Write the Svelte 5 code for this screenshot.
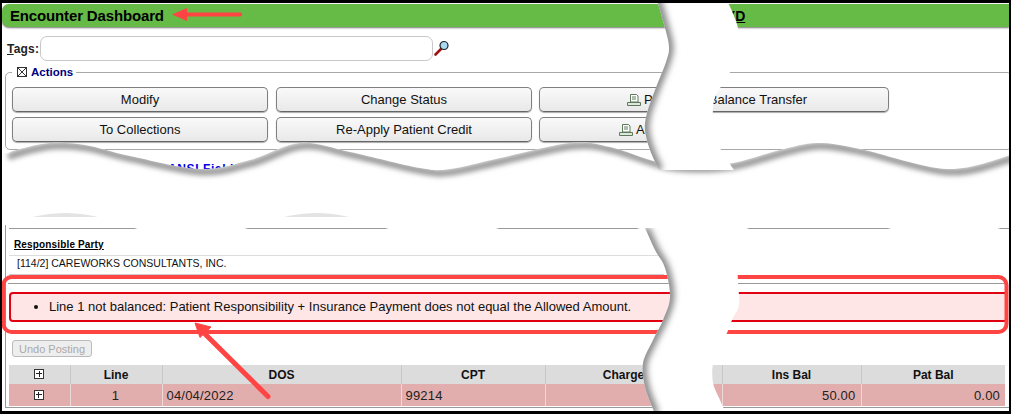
<script>
  function spline(p) {
    let d = `M${p[0][0]} ${p[0][1]}`;
    for (let i = 0; i < p.length - 1; i++) {
      const a = p[Math.max(i - 1, 0)], b = p[i], c = p[i + 1], e = p[Math.min(i + 2, p.length - 1)];
      const c1 = [b[0] + (c[0] - a[0]) / 6, b[1] + (c[1] - a[1]) / 6];
      const c2 = [c[0] - (e[0] - b[0]) / 6, c[1] - (e[1] - b[1]) / 6];
      d += `C${c1[0].toFixed(1)} ${c1[1].toFixed(1)} ${c2[0].toFixed(1)} ${c2[1].toFixed(1)} ${c[0]} ${c[1]}`;
    }
    return d;
  }
  const wave = [[8,153],[20,149],[50,143],[85,145],[130,156],[200,169],[250,160],[300,143],[350,152],[420,168],[450,169],[500,158],[570,143],[610,147],[657,162],[693,166],[733,163],[780,150],[817,143],[860,149],[947,169],[1011,155]];
  const low = [];
  for (let x = 1011; x >= 0; x -= 8) low.push(`L${x} ${(226 + 13 * Math.cos((2 * Math.PI * (x - 191)) / 251)).toFixed(1)}`);
  const waveD = spline(wave);
  const bandD = 'M2 153L' + waveD.slice(1) + low.join('') + 'Z';

  const leftTop = [[657,0],[665,28],[669,47],[666,62],[655,90],[647,113],[645,130],[650,150],[659,170]];
  const rightTop = [[727,0],[738,28],[736,50],[730,72],[716,95],[713,110],[713,130],[716,140],[721,150],[734,170]];
  const leftLow = [[645,228],[655,250],[665,268],[670,297],[663,320],[653,340],[643,363],[645,387],[655,414]];
  const rightLow = [[735,228],[737,260],[738,283],[739,305],[732,320],[727,333],[718,350],[713,363],[713,383],[720,400],[726,414]];
  const shape = (l, r) => spline(l) + 'L' + spline([...r].reverse()).slice(1) + 'Z';
  const topD = shape(leftTop, rightTop);
  const lowD = shape(leftLow, rightLow);
  const leftTopD = spline(leftTop);
  const leftLowD = spline(leftLow);

  const buttonsTop = ['Modify', 'Change Status'];
  const buttonsBottom = ['To Collections', 'Re-Apply Patient Credit'];
</script>

{#snippet printer()}
  <svg class="printer" width="14" height="12" viewBox="0 0 14 12" aria-hidden="true">
    <path d="M3.5 .5h6l1.5 1.5v6H3.5z" fill="#fff" stroke="#5c7a5c"/>
    <path d="M5 3h4M5 5h4" stroke="#5c7a5c"/>
    <path d="M.5 8.5h13v3H.5z" fill="#dfe7dc" stroke="#5c7a5c"/>
  </svg>
{/snippet}

{#snippet plus()}
  <span class="plus"></span>
{/snippet}

<div class="page">
  <header class="title">
    <h1>Encounter Dashboard</h1>
    <span class="user">KAY<u> D</u></span>
  </header>

  <div class="tags">
    <label for="tags"><u>T</u>ags:</label>
    <input id="tags" type="text" />
    <svg width="16" height="16" viewBox="0 0 16 16" aria-hidden="true">
      <path d="M1.5 14.5L7 9" stroke="#a01010" stroke-width="2.6" stroke-linecap="round"/>
      <circle cx="10" cy="5.5" r="4" fill="#a9d8f0" stroke="#222" stroke-width="1.2"/>
    </svg>
  </div>

  <fieldset class="actions">
    <legend><span class="check"></span>Actions</legend>
    <div class="btn-row">
      {#each buttonsTop as b}<button class="btn">{b}</button>{/each}
      <button class="btn wide">{@render printer()}<span><span class="lead">Print Patient </span>Balance Transfer</span></button>
    </div>
    <div class="btn-row">
      {#each buttonsBottom as b}<button class="btn">{b}</button>{/each}
      <button class="btn add">{@render printer()}Add</button>
    </div>
  </fieldset>

  <div class="ansi">ANSI Field</div>

  <section class="panel">
    <div class="rule"></div>
    <div class="rp-label">Responsible Party</div>
    <div class="rp-value">[114/2] CAREWORKS CONSULTANTS, INC.</div>
    <div class="rule2"></div>
    <ul class="alert">
      <li>Line 1 not balanced: Patient Responsibility + Insurance Payment does not equal the Allowed Amount.</li>
    </ul>
    <button class="undo" disabled>Undo Posting</button>
    <table>
      <colgroup>
        <col style="width:61px" /><col style="width:92px" /><col style="width:239px" /><col style="width:144px" />
        <col style="width:177px" /><col style="width:139px" /><col style="width:144px" />
      </colgroup>
      <thead>
        <tr>
          <th>{@render plus()}</th><th>Line</th><th>DOS</th><th>CPT</th><th class="charge">Charge</th><th>Ins Bal</th><th>Pat Bal</th>
        </tr>
      </thead>
      <tbody>
        <tr>
          <td class="c">{@render plus()}</td><td class="c">1</td><td>04/04/2022</td><td>99214</td>
          <td class="r">0.00</td><td class="r">50.00</td><td class="r">0.00</td>
        </tr>
      </tbody>
    </table>
  </section>

  <svg class="overlay" width="1011" height="414" viewBox="0 0 1011 414" aria-hidden="true">
    <defs>
      <filter id="soft" x="-5%" y="-40%" width="110%" height="180%"><feGaussianBlur stdDeviation="2.4"/></filter>
      <filter id="softv" x="-60%" y="-5%" width="220%" height="110%"><feGaussianBlur stdDeviation="3"/></filter>
      <clipPath id="bandClip"><path d={bandD}/></clipPath>
      <clipPath id="topClip"><path d={topD}/></clipPath>
      <clipPath id="lowClip"><path d={lowD}/></clipPath>
    </defs>

    <rect x="3.5" y="277" width="1003" height="55" rx="8" fill="none" stroke="#ff4444" stroke-width="4"/>

    <rect x="30" y="212" width="70" height="5" fill="#e3e3e3"/>
    <rect x="281" y="212" width="70" height="5" fill="#e3e3e3"/>

    <path d={bandD} fill="#fff"/>
    <g clip-path="url(#bandClip)">
      <path d={waveD} transform="translate(3 3)" fill="none" stroke="#999" stroke-width="7" stroke-linecap="round" filter="url(#soft)"/>
    </g>

    <path d={topD} fill="#fff"/>
    <path d={lowD} fill="#fff"/>
    <g clip-path="url(#topClip)"><path d={leftTopD} fill="none" stroke="#888" stroke-width="9" filter="url(#softv)"/></g>
    <g clip-path="url(#lowClip)"><path d={leftLowD} fill="none" stroke="#888" stroke-width="9" filter="url(#softv)"/></g>

    <path d="M183 14.5H240" stroke="#ff4444" stroke-width="4" stroke-linecap="round"/>
    <path d="M172 14.5L187 8V21Z" fill="#ff4444"/>
    <path d="M268 396.5L203 332" stroke="#ff4444" stroke-width="5" stroke-linecap="round"/>
    <path d="M195 323L211 327L200 337.5Z" fill="#ff4444" stroke="#ff4444" stroke-linejoin="round"/>
  </svg>
</div>

<style>
  :global(body) { margin: 0; background: #fff; }
  .page {
    position: relative;
    box-sizing: border-box;
    width: 1011px;
    height: 414px;
    overflow: hidden;
    border: solid #000;
    border-width: 3px 2px;
    background: #fff;
    font-family: "Liberation Sans", Arial, sans-serif;
    color: #000;
  }
  .title {
    display: flex;
    align-items: center;
    height: 23px;
    margin-top: 1px;
    padding-left: 8px;
    background: #66bb46;
    border-radius: 7px 0 0 7px;
    box-shadow: 0 1px 2px #777;
  }
  h1 { margin: 0; font-size: 15px; font-weight: 700; letter-spacing: -.15px; }
  .user { margin-left: 543px; font-size: 14px; font-weight: 700; white-space: pre; }
  .user u { word-spacing: 2px; }
  .tags {
    display: flex;
    align-items: center;
    height: 25px;
    margin-top: 9px;
    padding-left: 5px;
  }
  .tags label { width: 33px; font-size: 12px; font-weight: 700; letter-spacing: .2px; color: #222; }
  .tags input {
    box-sizing: border-box;
    width: 393px;
    height: 25px;
    padding: 0 4px;
    border: 1px solid #c8c8c8;
    border-radius: 7px;
    background: #fff;
    outline: none;
  }
  .tags svg { margin: -2px 0 0 1px; }
  .actions {
    box-sizing: border-box;
    min-width: 0;
    height: 84px;
    margin: 5px -3px 0 3px;
    padding: 9px 6px 0;
    border: 1px solid #a8a8a8;
    border-radius: 5px;
  }
  legend {
    display: flex;
    align-items: center;
    height: 12px;
    margin-left: 0;
    padding: 0 3px 0 5px;
    font-size: 11.5px;
    font-weight: 700;
    color: #000080;
  }
  .check {
    position: relative;
    box-sizing: border-box;
    width: 10px;
    height: 10px;
    margin-right: 4px;
    border: 1px solid #333;
    background:
      linear-gradient(45deg, transparent 46%, #333 46%, #333 54%, transparent 54%),
      linear-gradient(-45deg, transparent 46%, #333 46%, #333 54%, transparent 54%);
  }
  .btn-row { display: flex; gap: 8px; margin-bottom: 5px; }
  .btn {
    box-sizing: border-box;
    display: flex;
    align-items: center;
    justify-content: center;
    width: 256px;
    height: 25px;
    padding: 0;
    border: 1px solid #7f7f7f;
    border-bottom-color: #666;
    border-radius: 5px;
    background: linear-gradient(#f9f9f9, #e9e9e9);
    box-shadow: 0 1px 1px #aaa;
    font: 13px "Liberation Sans", Arial, sans-serif;
    color: #111;
    white-space: nowrap;
  }
  .btn-row .btn:nth-child(3) { margin-left: -1px; }
  .wide { width: 350px; justify-content: flex-start; padding-left: 87px; }
  .add { width: 165px; justify-content: flex-start; padding-left: 79px; }
  .lead { margin-right: -6px; }
  .printer { margin-right: 3px; flex: none; }
  .ansi {
    height: 15px;
    margin: 12px 0 48px 166px;
    font-size: 12px;
    font-weight: 700;
    letter-spacing: .6px;
    color: #0000e0;
  }
  .panel {
    box-sizing: border-box;
    height: 183px;
    margin-left: 3px;
    margin-right: -2px;
    padding-top: 3px;
    border-left: 1px solid #999;
    border-bottom: 1px solid #999;
  }
  .rule { height: 1px; margin-left: 3px; background: #999; }
  .rp-label {
    height: 14px;
    margin: 9px 0 0 8px;
    font-size: 10px;
    line-height: 14px;
    font-weight: 700;
    letter-spacing: .15px;
    text-decoration: underline;
  }
  .rp-value {
    box-sizing: border-box;
    width: 655px;
    height: 21px;
    margin: 3px 0 0 3px;
    padding-left: 8px;
    border-top: 1px solid #ddd;
    border-bottom: 2px solid #ccc;
    font-size: 10.5px;
    line-height: 15px;
    color: #111;
  }
  .rule2 { height: 1px; margin: 7px 4px 0 2px; background: #999; }
  .alert {
    box-sizing: border-box;
    height: 30px;
    margin: 8px 3px 0 3px;
    padding: 0 0 0 38px;
    list-style: disc;
    border: 2px solid #e00010;
    border-radius: 4px;
    background: #fee6e6;
    font-size: 13px;
    line-height: 26px;
    color: #111;
  }
  .undo {
    display: block;
    box-sizing: border-box;
    width: 80px;
    height: 17px;
    margin: 18px 0 0 6px;
    padding: 0;
    border: 1px solid #bbb;
    border-radius: 3px;
    background: #eee;
    font: 11px "Liberation Sans", Arial, sans-serif;
    color: #aaa;
  }
  table {
    width: 996px;
    margin: 8px 0 0 3px;
    border-collapse: collapse;
    table-layout: fixed;
  }
  th {
    height: 19px;
    padding: 0;
    background: #dcdcdc;
    border-right: 1px solid #c8c8c8;
    font-size: 12px;
    font-weight: 700;
    color: #111;
    vertical-align: middle;
  }
  th .plus { margin-top: -3px; }
  th.charge { padding-right: 20px; }
  td {
    height: 22px;
    padding: 0 5px 0 4px;
    background: #e2adad;
    border-right: 1px solid #eed9d9;
    font-size: 13px;
    letter-spacing: .2px;
    color: #222;
  }
  td .plus { margin-top: -3px; }
  th:last-child, td:last-child { border-right: 0; }
  .c { text-align: center; }
  .r { text-align: right; }
  .plus {
    position: relative;
    display: inline-block;
    box-sizing: border-box;
    width: 10px;
    height: 10px;
    border: 1px solid #333;
    background:
      linear-gradient(#222, #222) center / 6px 1px no-repeat,
      linear-gradient(#222, #222) center / 1px 6px no-repeat,
      #fff;
    vertical-align: middle;
  }
  .overlay { position: absolute; left: -2px; top: -3px; pointer-events: none; }
</style>
